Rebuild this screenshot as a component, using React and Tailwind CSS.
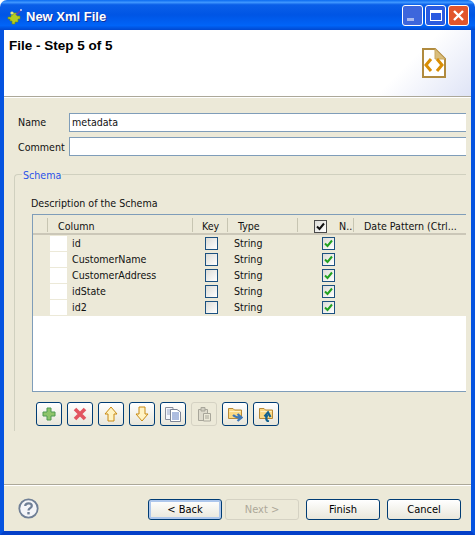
import React from "react";

const font = { fontFamily: '"DejaVu Sans Condensed", "Liberation Sans", Arial, sans-serif' };
const titleFont = { fontFamily: '"Liberation Sans", Arial, sans-serif' };

const columns = ["id", "CustomerName", "CustomerAddress", "idState", "id2"];

const Check = ({ color = "#21a121" }) => (
  <svg width="9" height="9" viewBox="0 0 9 9">
    <path d="M1 4.5 L3.5 7 L8 1.5" fill="none" stroke={color} strokeWidth="2" />
  </svg>
);

const CheckBox = ({ checked, dark }) => (
  <span
    className={`flex h-[13px] w-[13px] items-center justify-center border bg-gradient-to-br from-[#dcdcd7] to-white ${
      dark ? "border-[#4a4a4a]" : "border-[#1c5180]"
    }`}
  >
    {checked && <Check color={dark ? "#111111" : "#21a121"} />}
  </span>
);

const PuzzleIcon = () => (
  <svg width="16" height="16" viewBox="0 0 16 16">
    <path
      d="M1 8 H4 V6 H6 V4 H10 V7 H13 V10 H11 V13 H8 V15 H5 V12 H3 V10 H1 Z"
      fill="#b4cc22"
      stroke="#6d8a12"
      strokeWidth="0.6"
    />
    <circle cx="5" cy="4" r="1.6" fill="#e4e884" />
    <path d="M9 6 L14 1" stroke="#5a3fb5" strokeWidth="1.6" />
    <path d="M13 1 H15 M14 0 V2" stroke="#ffffff" strokeWidth="0.7" />
  </svg>
);

const XmlFileIcon = () => (
  <svg width="24" height="30" viewBox="0 0 24 30">
    <path d="M1 1 H13 L23 11 V29 H1 Z" fill="#ffffff" stroke="#b08a3e" strokeWidth="2" />
    <path d="M13 1 V11 H23 Z" fill="#d9bd7c" stroke="#c9a85f" strokeWidth="1" />
    <path d="M9 11 L4 17 L9 23" fill="none" stroke="#d98e04" strokeWidth="3" />
    <path d="M15 11 L20 17 L15 23" fill="none" stroke="#d98e04" strokeWidth="3" />
  </svg>
);

const WindowButton = ({ className, children }) => (
  <div
    className={`flex h-[21px] w-[21px] items-center justify-center rounded-[3px] border border-white ${className}`}
  >
    {children}
  </div>
);

const ToolButton = ({ disabled, children }) => (
  <button
    className={`flex h-[24px] w-[26px] items-center justify-center rounded-[3px] border ${
      disabled
        ? "border-[#d5d2c3] bg-[#ece9d8]"
        : "border-[#003c74] bg-gradient-to-b from-white to-[#e8e6da]"
    }`}
  >
    {children}
  </button>
);

const PlusIcon = () => (
  <svg width="14" height="14" viewBox="0 0 14 14">
    <path d="M5 1 H9 V5 H13 V9 H9 V13 H5 V9 H1 V5 H5 Z" fill="#8ec46a" stroke="#4f9a52" />
  </svg>
);

const CrossIcon = () => (
  <svg width="14" height="14" viewBox="0 0 14 14">
    <path d="M2 2 L12 12 M12 2 L2 12" stroke="#e25561" strokeWidth="3.6" />
  </svg>
);

const ArrowUpIcon = () => (
  <svg width="14" height="16" viewBox="0 0 14 16">
    <path d="M7 1 L13 8 H10 V15 H4 V8 H1 Z" fill="#fff3c4" stroke="#c98a12" />
  </svg>
);

const ArrowDownIcon = () => (
  <svg width="14" height="16" viewBox="0 0 14 16">
    <path d="M4 1 H10 V8 H13 L7 15 L1 8 H4 Z" fill="#fff3c4" stroke="#c98a12" />
  </svg>
);

const CopyIcon = () => (
  <svg width="16" height="16" viewBox="0 0 16 16">
    <path d="M0.5 1.5 H8 V13.5 H0.5 Z" fill="#f4f6fb" stroke="#8a8f9c" />
    <path d="M2 4 H7 M2 6 H7 M2 8 H7" stroke="#9aa8c8" />
    <path d="M5.5 3.5 H12 L15.5 6 V15.5 H5.5 Z" fill="#ffffff" stroke="#7d8596" />
    <path d="M7 7 H14 M7 9 H14 M7 11 H14 M7 13 H14" stroke="#5f7cc0" />
  </svg>
);

const PasteIcon = () => (
  <svg width="16" height="16" viewBox="0 0 16 16">
    <path d="M2.5 3.5 H11.5 V14.5 H2.5 Z" fill="#dedbcd" stroke="#a8a69a" />
    <path d="M5 1.5 H9 V5 H5 Z" fill="#d0cdc0" stroke="#a8a69a" />
    <path d="M7.5 7.5 H14.5 V15 H7.5 Z" fill="#ece9d8" stroke="#a8a69a" />
    <path d="M9 10 H13 M9 12 H13" stroke="#a8a69a" />
  </svg>
);

const FolderIcon = ({ up }) => (
  <svg width="16" height="16" viewBox="0 0 16 16">
    <path d="M1.5 2.5 H6 L7.5 4 H14.5 V12.5 H1.5 Z" fill="#fbd983" stroke="#b98a36" />
    <path d="M2.5 5.5 H13.5" stroke="#fff0c0" />
    {up ? (
      <path d="M11 15.5 C8 15 7.5 12 9.5 9 M6.5 10.5 L10 6.5 L12.5 11" fill="none" stroke="#12628f" strokeWidth="2.2" />
    ) : (
      <path d="M6 9 C8 11 10 11.5 13 11.5 M10.5 8 L14.5 11.5 L10.5 15" fill="none" stroke="#3f78b8" strokeWidth="2.2" />
    )}
  </svg>
);

const HelpIcon = () => (
  <svg width="21" height="21" viewBox="0 0 21 21">
    <circle cx="10.5" cy="10.5" r="9.2" fill="#f4f5f8" stroke="#6f7f96" strokeWidth="1.8" />
    <path
      d="M7.2 8 C7.4 4.6 13.8 4.6 13.8 8 C13.8 10.2 10.5 10.2 10.5 12.5"
      fill="none"
      stroke="#6f7f96"
      strokeWidth="2.2"
    />
    <rect x="9.3" y="14" width="2.4" height="2.4" fill="#6f7f96" />
  </svg>
);

const WizardButton = ({ label, disabled, primary, className = "" }) => (
  <button
    className={`h-[21px] rounded-[3px] border text-[11px] ${className} ${
      disabled
        ? "border-[#d5d2c3] bg-[#ece9d8] text-[#aca899]"
        : "border-[#003c74] bg-gradient-to-b from-white to-[#e9e7db] text-black"
    } ${primary ? "shadow-[inset_0_0_0_2px_#aec7ec]" : ""}`}
  >
    {label}
  </button>
);

const App = () => {
  return (
    <div
      className="flex h-[535px] w-[475px] flex-col overflow-hidden bg-white text-[10.6px] leading-[14px] text-[#111111]"
      style={font}
    >
      {/* Title bar */}
      <div className="flex h-[30px] shrink-0 items-center rounded-t-[7px] bg-[linear-gradient(180deg,#0a6af0_0%,#3f97ff_8%,#0a5fe8_16%,#0055e5_50%,#0064f8_85%,#0048d0_100%)] pl-[7px] pr-[6px] pt-[3px]">
        <PuzzleIcon />
        <span
          className="ml-[3px] text-[13px] font-bold text-white [text-shadow:1px_1px_0_#0f2f9a]"
          style={titleFont}
        >
          New Xml File
        </span>
        <div className="ml-auto mb-[3px] flex gap-[2px]">
          <WindowButton className="border-[#9db4ee] bg-[#3d66dc]">
            <span className="mt-[8px] mr-[4px] h-[3px] w-[7px] bg-[#a9b9ee]" />
          </WindowButton>
          <WindowButton className="bg-[#2a5be0]">
            <span className="h-[11px] w-[12px] border border-t-[3px] border-white" />
          </WindowButton>
          <WindowButton className="bg-[#e2552c]">
            <svg width="13" height="13" viewBox="0 0 13 13">
              <path d="M2 2 L11 11 M11 2 L2 11" stroke="#ffffff" strokeWidth="2.4" />
            </svg>
          </WindowButton>
        </div>
      </div>

      <div className="flex min-h-0 flex-1 flex-col border-x-[4px] border-b-[4px] border-x-[#0553e0] border-b-[#0440c8] bg-[#ece9d8]">
        {/* Wizard header */}
        <div className="flex h-[66px] shrink-0 bg-[linear-gradient(135deg,#ffffff_82%,#dfe4f6_100%)] pl-[5px] pr-[25px]">
          <span className="mt-[8px] text-[13.5px] font-bold leading-[16px] text-black" style={titleFont}>
            File - Step 5 of 5
          </span>
          <div className="ml-auto mt-[18px]">
            <XmlFileIcon />
          </div>
        </div>
        <div className="h-[2px] shrink-0 border-t border-[#aca899] bg-white" />

        {/* Form */}
        <div className="flex flex-col pl-[14px] pr-[5px] pt-[15px]">
          <div className="flex h-[19px] items-center">
            <label className="w-[51px] shrink-0 pb-[2px]">Name</label>
            <div className="flex h-[19px] flex-1 items-center border border-r-0 border-[#7f9db9] bg-white pb-[2px] pl-[2px]">
              metadata
            </div>
          </div>
          <div className="mt-[5px] flex h-[19px] items-center">
            <label className="w-[51px] shrink-0">Comment</label>
            <div className="h-[19px] flex-1 border border-r-0 border-[#7f9db9] bg-white" />
          </div>

          {/* Schema group */}
          <div className="-ml-[4px] mt-[18px] h-[257px] rounded-tl-[4px] border-l border-t border-[#d0d0bf] pl-[17px]">
            <span className="-mt-[7px] ml-[-10px] block w-fit bg-[#ece9d8] px-[1px] text-[#2a52e8]">
              Schema
            </span>
            <div className="-ml-[1px] mt-[14px]">Description of the Schema</div>
            <div className="mt-[4px] flex h-[178px] flex-col border-b border-l border-t border-[#7f9db9] bg-white">
              {/* Table header */}
              <div className="grid h-[20px] shrink-0 grid-cols-[15px_145px_35px_70px_56px_1fr] items-center border-b-[2px] border-[#cbc7b8] bg-[#ece9d8] pt-[2px] leading-[16px]">
                <div className="h-[14px] border-r border-[#c7c5b2]" />
                <div className="h-[14px] border-r border-[#c7c5b2] pl-[10px]">Column</div>
                <div className="h-[14px] border-r border-[#c7c5b2] pl-[9px]">Key</div>
                <div className="h-[14px] border-r border-[#c7c5b2] pl-[10px]">Type</div>
                <div className="flex h-[14px] items-center border-r border-[#c7c5b2] pl-[16px] pt-[2px]">
                  <CheckBox checked dark />
                  <span className="ml-[12px]">N..</span>
                </div>
                <div className="h-[14px] truncate pl-[10px]">Date Pattern (Ctrl...</div>
              </div>
              {/* Table rows */}
              <div className="shrink-0 bg-[#ece9d8] pb-[1px]">
                {columns.map((name) => (
                  <div
                    key={name}
                    className="grid h-[16px] grid-cols-[17px_17px_126px_35px_70px_56px_1fr] items-center"
                  >
                    <div />
                    <div className="h-[15px] bg-white" />
                    <div className="pl-[5px]">{name}</div>
                    <div className="pl-[12px]">
                      <CheckBox />
                    </div>
                    <div className="pl-[6px]">String</div>
                    <div className="pl-[24px]">
                      <CheckBox checked />
                    </div>
                    <div />
                  </div>
                ))}
              </div>
            </div>

            {/* Toolbar */}
            <div className="ml-[4px] mt-[10px] flex gap-[5px]">
              <ToolButton><PlusIcon /></ToolButton>
              <ToolButton><CrossIcon /></ToolButton>
              <ToolButton><ArrowUpIcon /></ToolButton>
              <ToolButton><ArrowDownIcon /></ToolButton>
              <ToolButton><CopyIcon /></ToolButton>
              <ToolButton disabled><PasteIcon /></ToolButton>
              <ToolButton><FolderIcon /></ToolButton>
              <ToolButton><FolderIcon up /></ToolButton>
            </div>
          </div>
        </div>

        {/* Footer */}
        <div className="mt-auto h-[2px] shrink-0 border-t border-[#aca899] bg-white" />
        <div className="flex h-[45px] shrink-0 items-start pl-[14px] pr-[10px] pt-[12px]">
          <HelpIcon />
          <div className="ml-auto mt-[1px] flex">
            <WizardButton label="< Back" primary className="w-[74px]" />
            <WizardButton label="Next >" disabled className="ml-[3px] w-[74px]" />
            <WizardButton label="Finish" className="ml-[7px] w-[74px]" />
            <WizardButton label="Cancel" className="ml-[7px] w-[74px]" />
          </div>
        </div>
      </div>
    </div>
  );
};

export default App;
